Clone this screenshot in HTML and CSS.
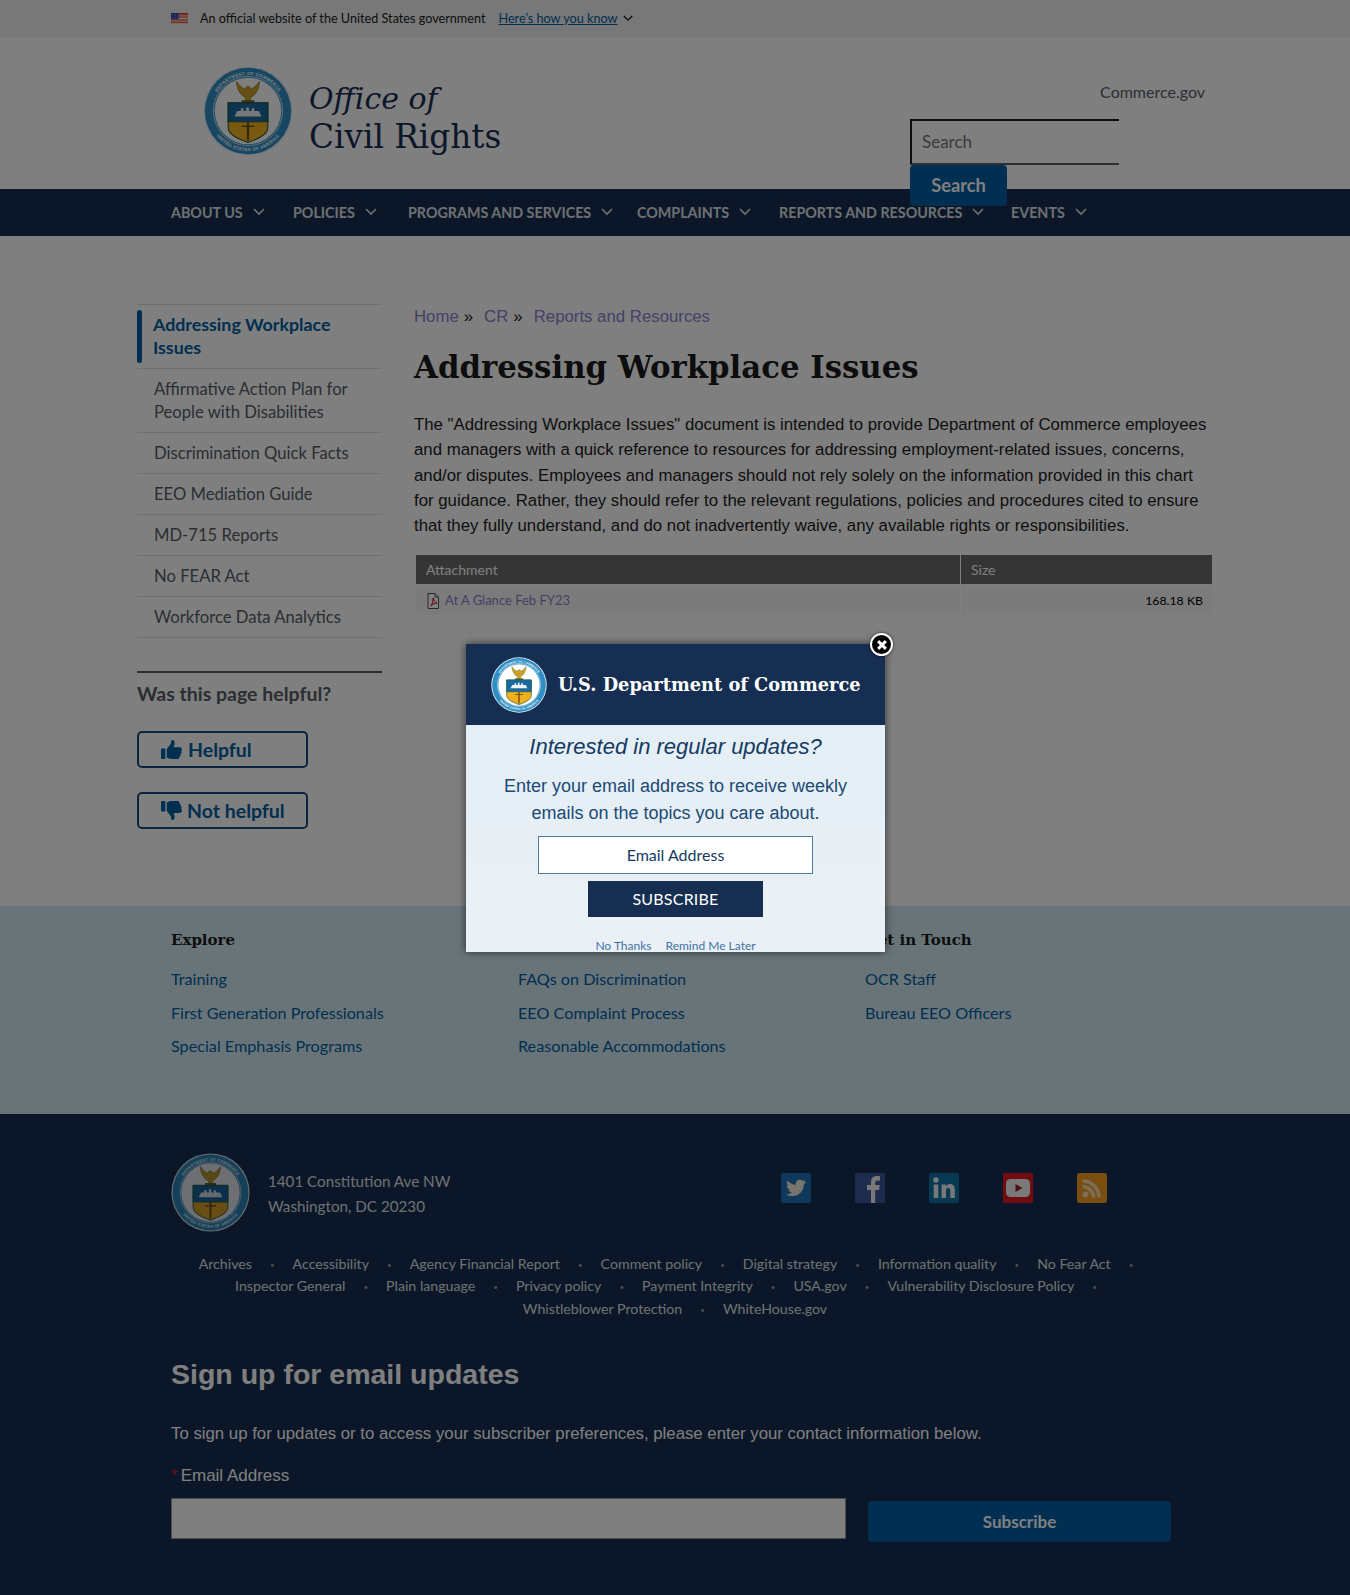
FILE: index.html
```html
<!DOCTYPE html>
<html lang="en">
<head>
<meta charset="utf-8">
<title>Addressing Workplace Issues</title>
<link rel="stylesheet" href="styles.css">
</head>
<body>
<svg class="defs" width="0" height="0" aria-hidden="true">
  <defs>
    <symbol id="seal" viewBox="0 0 100 100">
      <circle cx="50" cy="50" r="49.5" fill="#e8f2f8"/>
      <circle cx="50" cy="50" r="48" fill="#2f8fc4"/>
      <circle cx="50" cy="50" r="37" fill="#fff"/>
      <circle cx="50" cy="50" r="38.500" fill="none" stroke="#cfe6f3" stroke-width="1"/>
      <path id="arcTop" d="M10 50a40 40 0 0 1 80 0" fill="none"/>
      <path id="arcBot" d="M5.500 50a44.500 44.500 0 0 0 89 0" fill="none"/>
      <text class="seal-text"><textPath href="#arcTop" startOffset="50%" text-anchor="middle">DEPARTMENT OF COMMERCE</textPath></text>
      <text class="seal-text"><textPath href="#arcBot" startOffset="50%" text-anchor="middle">UNITED STATES OF AMERICA</textPath></text>
      <path d="M37 17c1 9 4 15 10 18l1 4h4l1-4c6-3 9-9 10-18-3 4-6 7-10 9l-1-3h-4l-1 3c-4-2-7-5-10-9z" fill="#c9a227" stroke="#6a5413" stroke-width=".6"/>
      <path d="M43 38h14v3H43z" fill="#7a6212"/>
      <path d="M28 41h44v28c0 8-14 13-22 16-8-3-22-8-22-16z" fill="#f2b01e" stroke="#1f5a46" stroke-width="1.200"/>
      <path d="M28 41h44v21H28z" fill="#1a6ba3" stroke="#1f5a46" stroke-width="1.200"/>
      <path d="M35 56l3-6h4v-3h3v3h3v-4h3v4h3v-3h3v3h5l3 6z" fill="#eef2f5"/>
      <path d="M50 62v21" stroke="#6b4f10" stroke-width="2.400"/>
      <path d="M43 67h14" stroke="#6b4f10" stroke-width="1.600"/>
    </symbol>
    <symbol id="chev" viewBox="0 0 12 8">
      <path d="M1 1l5 5 5-5" fill="none" stroke="currentColor" stroke-width="1.600"/>
    </symbol>
    <symbol id="thumb" viewBox="0 0 22 20">
      <path d="M0 9h4.500v11H0zM6 9.500l4-5c.7-1 .6-2 .6-3.200C10.600.400 11.400 0 12 0c1.600 0 2.400 1.700 2.400 3.200 0 1.500-.8 3-1.200 4.300h6.300c1.400 0 2.500 1 2.500 2.200 0 .8-.4 1.400-.9 1.800.3.400.5.900.5 1.400 0 .9-.5 1.600-1.200 2 .1.300.2.600.2.900 0 .9-.6 1.600-1.400 1.900.1.300.1.500.1.700 0 1.400-1.200 1.600-2.400 1.600H11c-2 0-3.400-.7-5-1.500z" fill="currentColor"/>
    </symbol>
  </defs>
</svg>

<section class="gov-banner">
  <div class="gov-inner">
    <svg class="flag" viewBox="0 0 20 13" width="17" height="11" aria-hidden="true">
      <rect width="20" height="13" fill="#db3e1f"/>
      <path d="M0 2h20v1H0zM0 4h20v1H0zM0 6h20v1H0zM0 8h20v1H0zM0 10h20v1H0zM0 12h20v1H0z" fill="#fff"/>
      <rect width="9" height="7" fill="#1e33b1"/>
      <path d="M1 1.500h7M1 3.500h7M1 5.500h7" stroke="#fff" stroke-width=".7" stroke-dasharray="1 1"/>
    </svg>
    <span class="gov-text">An official website of the United States government</span>
    <a class="gov-link" href="#">Here’s how you know</a>
    <svg class="gov-chev" width="10" height="7"><use href="#chev"/></svg>
  </div>
</section>

<header class="site-header">
  <a class="brand" href="#">
    <svg class="brand-seal"><use href="#seal"/></svg>
    <span class="brand-name"><em class="brand-office">Office of</em><br>Civil Rights</span>
  </a>
  <div class="header-tools">
    <a class="commerce-link" href="#">Commerce.gov</a>
    <form class="search">
      <input class="search-input" type="text" placeholder="Search">
      <button class="search-button" type="button">Search</button>
    </form>
  </div>
</header>

<nav class="main-nav">
  <ul class="nav-list">
    <li class="nav-item nav-about">About us<svg class="nav-chev"><use href="#chev"/></svg></li>
    <li class="nav-item nav-policies">Policies<svg class="nav-chev"><use href="#chev"/></svg></li>
    <li class="nav-item nav-programs">Programs and Services<svg class="nav-chev"><use href="#chev"/></svg></li>
    <li class="nav-item nav-complaints">Complaints<svg class="nav-chev"><use href="#chev"/></svg></li>
    <li class="nav-item nav-reports">Reports and Resources<svg class="nav-chev"><use href="#chev"/></svg></li>
    <li class="nav-item nav-events">Events<svg class="nav-chev"><use href="#chev"/></svg></li>
  </ul>
</nav>

<div class="page-body">
  <aside class="sidebar">
    <ul class="side-nav">
      <li class="side-item side-active"><a href="#">Addressing Workplace Issues</a></li>
      <li class="side-item"><a href="#">Affirmative Action Plan for People with Disabilities</a></li>
      <li class="side-item"><a href="#">Discrimination Quick Facts</a></li>
      <li class="side-item"><a href="#">EEO Mediation Guide</a></li>
      <li class="side-item"><a href="#">MD-715 Reports</a></li>
      <li class="side-item"><a href="#">No FEAR Act</a></li>
      <li class="side-item"><a href="#">Workforce Data Analytics</a></li>
    </ul>
    <div class="helpful">
      <h2 class="helpful-title">Was this page helpful?</h2>
      <button class="helpful-btn" type="button"><svg class="thumb"><use href="#thumb"/></svg>Helpful</button>
      <button class="helpful-btn" type="button"><svg class="thumb thumb-down"><use href="#thumb"/></svg>Not helpful</button>
    </div>
  </aside>
  <main class="content">
    <div class="crumbs"><a href="#">Home</a><span class="crumb-sep">»</span><a href="#">CR</a><span class="crumb-sep">»</span><a href="#">Reports and Resources</a></div>
    <h1 class="page-title">Addressing Workplace Issues</h1>
    <p class="lead">The "Addressing Workplace Issues" document is intended to provide Department of Commerce employees and managers with a quick reference to resources for addressing employment-related issues, concerns, and/or disputes. Employees and managers should not rely solely on the information provided in this chart for guidance. Rather, they should refer to the relevant regulations, policies and procedures cited to ensure that they fully understand, and do not inadvertently waive, any available rights or responsibilities.</p>
    <table class="files">
      <thead><tr><th class="col-name">Attachment</th><th>Size</th></tr></thead>
      <tbody><tr>
        <td><svg class="pdf" viewBox="0 0 14 16" width="14" height="16" aria-hidden="true"><path d="M2 .500h7l3.500 3.500v11.500H2z" fill="#fff" stroke="#555"/><path d="M9 .500V4h3.500" fill="#ddd" stroke="#555"/><path d="M5 13c2-3 2-6 2-8 1 3 2 4 4 5-2 0-4 1-6 3z" fill="none" stroke="#c00"/></svg><a href="#">At A Glance Feb FY23</a></td>
        <td class="size">168.18 KB</td>
      </tr></tbody>
    </table>
  </main>
</div>

<footer class="footer">
  <section class="footer-links">
    <div class="footer-col">
      <h3 class="footer-head">Explore</h3>
      <a href="#">Training</a><a href="#">First Generation Professionals</a><a href="#">Special Emphasis Programs</a>
    </div>
    <div class="footer-col">
      <h3 class="footer-head">Learn More</h3>
      <a href="#">FAQs on Discrimination</a><a href="#">EEO Complaint Process</a><a href="#">Reasonable Accommodations</a>
    </div>
    <div class="footer-col">
      <h3 class="footer-head">Get in Touch</h3>
      <a href="#">OCR Staff</a><a href="#">Bureau EEO Officers</a>
    </div>
  </section>
  <section class="footer-dark">
    <div class="identity">
      <div class="address">
        <svg class="footer-seal"><use href="#seal"/></svg>
        <p class="address-text">1401 Constitution Ave NW<br>Washington, DC 20230</p>
      </div>
      <div class="social">
        <a class="soc soc-tw" href="#" aria-label="Twitter"><svg viewBox="0 0 30 30"><rect width="30" height="30" rx="2" fill="#1d73b8"/><path d="M25 8.500c-.8.400-1.600.6-2.400.7.900-.5 1.500-1.300 1.800-2.200-.8.500-1.700.8-2.600 1-1.600-1.700-4.200-1.800-5.800-.2-1 1-1.500 2.500-1.200 3.900-3.300-.2-6.400-1.700-8.400-4.300-1.100 1.900-.5 4.300 1.300 5.500-.7 0-1.300-.2-1.900-.5 0 2 1.400 3.700 3.300 4.100-.6.200-1.200.2-1.900.1.500 1.700 2.100 2.800 3.800 2.900-1.700 1.300-3.900 2-6 1.700 1.900 1.200 4 1.900 6.300 1.900 7.500 0 11.800-6.300 11.600-11.900.8-.6 1.500-1.300 2.100-2.200z" fill="#f2e9dd"/></svg></a>
        <a class="soc soc-fb" href="#" aria-label="Facebook"><svg viewBox="0 0 30 30"><rect width="30" height="30" rx="2" fill="#3b5998"/><path d="M16 30V17h-4v-5h4V9c0-4 2.400-6 6-6 1.500 0 2.700.1 3 .2V7.500h-2.300c-2 0-2.500 1-2.500 2.300V12h4.500l-.6 5h-3.900v13z" fill="#f0f0f0"/></svg></a>
        <a class="soc soc-li" href="#" aria-label="LinkedIn"><svg viewBox="0 0 30 30"><rect width="30" height="30" rx="2" fill="#0d72a4"/><circle cx="7" cy="7" r="2.700" fill="#f0f0f0"/><path d="M4.700 11.500h4.600V25H4.700zM12.500 11.500h4.300v1.900c.8-1.400 2.300-2.300 4-2.300 4 0 5 2.500 5 6V25h-4.500v-7c0-1.800-.5-3-2-3-1.800 0-2.300 1.300-2.300 3v7h-4.500z" fill="#f0f0f0"/></svg></a>
        <a class="soc soc-yt" href="#" aria-label="YouTube"><svg viewBox="0 0 30 30"><rect width="30" height="30" rx="2" fill="#e31b23"/><rect x="3" y="6" width="24" height="18" rx="4.500" fill="#f2f2f2"/><path d="M12.500 11l7 4-7 4z" fill="#a01c20"/></svg></a>
        <a class="soc soc-rss" href="#" aria-label="RSS"><svg viewBox="0 0 30 30"><rect width="30" height="30" rx="3" fill="#f59d1f"/><circle cx="8.500" cy="21.500" r="3" fill="#f6ddb0"/><path d="M5.500 13.500a11 11 0 0 1 11 11M5.500 8a16.500 16.500 0 0 1 16.500 16.500" fill="none" stroke="#f6ddb0" stroke-width="3.600"/></svg></a>
      </div>
    </div>
    <ul class="policy-links">
      <li><a href="#">Archives</a></li><li><a href="#">Accessibility</a></li><li><a href="#">Agency Financial Report</a></li><li><a href="#">Comment policy</a></li><li><a href="#">Digital strategy</a></li><li><a href="#">Information quality</a></li><li><a href="#">No Fear Act</a></li><li><a href="#">Inspector General</a></li><li><a href="#">Plain language</a></li><li><a href="#">Privacy policy</a></li><li><a href="#">Payment Integrity</a></li><li><a href="#">USA.gov</a></li><li><a href="#">Vulnerability Disclosure Policy</a></li><li><a href="#">Whistleblower Protection</a></li><li class="no-dot"><a href="#">WhiteHouse.gov</a></li>
    </ul>
    <div class="signup">
      <h2 class="signup-title">Sign up for email updates</h2>
      <p class="signup-text">To sign up for updates or to access your subscriber preferences, please enter your contact information below.</p>
      <label class="signup-label"><span class="req">*</span>Email Address</label>
      <div class="signup-row">
        <input class="signup-input" type="text" aria-label="Email Address">
        <button class="signup-btn" type="button">Subscribe</button>
      </div>
    </div>
  </section>
</footer>

<div class="overlay"></div>

<div class="modal">
  <div class="modal-head">
    <svg class="modal-seal"><use href="#seal"/></svg>
    <span class="modal-org">U.S. Department of Commerce</span>
  </div>
  <div class="modal-body">
    <h2 class="modal-q">Interested in regular updates?</h2>
    <p class="modal-text">Enter your email address to receive weekly<br>emails on the topics you care about.</p>
    <input class="modal-input" type="text" placeholder="Email Address">
    <button class="modal-sub" type="button">SUBSCRIBE</button>
    <div class="modal-links"><a href="#">No Thanks</a><a href="#">Remind Me Later</a></div>
  </div>
</div>
<button class="modal-close" type="button" aria-label="Close"><svg viewBox="0 0 14 14" width="12" height="12"><path d="M2.500 2.500l9 9M11.500 2.500l-9 9" stroke="#fff" stroke-width="3.400"/></svg></button>
</body>
</html>
```
FILE: styles.css
```css
* { box-sizing: border-box; }
html, body { margin: 0; padding: 0; }
body {
  position: relative;
  min-height: 1595px;
  background: #fff;
  color: #1b1b1b;
  font-family: "Lato", "Liberation Sans", sans-serif;
  overflow-x: hidden;
}
.defs { position: absolute; }
a { text-decoration: none; color: inherit; }
ul { list-style: none; margin: 0; padding: 0; }
.seal-text { font: 700 5px "Liberation Sans", sans-serif; fill: #fff; letter-spacing: .35px; }

/* gov banner */
.gov-banner { height: 38px; background: #f0f0f0; padding-left: 171px; }
.gov-inner { display: flex; align-items: center; height: 36px; font-size: 12.650px; }
.flag { margin-right: 12px; }
.gov-text { margin-right: 13px; }
.gov-link { color: #005ea2; text-decoration: underline; }
.gov-chev { margin-left: 6px; }

/* header */
.site-header { position: relative; height: 151px; background: #fff; padding-left: 203px; }
.brand { display: flex; align-items: flex-start; gap: 16px; padding-top: 28px; color: #162e51; }
.brand-seal { width: 90px; height: 90px; flex: none; }
.brand-name { margin-top: 13px; font: 400 32.700px/38px "DejaVu Serif", "Liberation Serif", serif; }
.brand-office { font-size: 30px; }
.header-tools { position: absolute; left: 910px; top: 0; width: 300px; }
.commerce-link { display: block; text-align: right; padding-right: 5px; padding-top: 44px; font-size: 16px; line-height: 20px; color: #565c65; }
.search { display: block; margin-top: 17px; }
.search-input {
  display: block; width: 209px; height: 46px; padding: 0 10px 2px;
  border: 2px solid #1b1b1b; border-right: 0; border-bottom-color: #565c65;
  background: #fff; font: 17px "Lato", sans-serif; outline: 0;
}
.search-input::placeholder { color: #71767a; }
.search-button {
  display: block; position: relative; z-index: 2; width: 97px; height: 41px; padding: 0 0 2px; border: 0; border-radius: 4px;
  background: #005ea2; color: #fff; font: 700 18.300px "Lato", sans-serif;
}

/* nav */
.main-nav { height: 47px; background: #162e51; }
.nav-list { display: flex; height: 46px; padding-left: 171px; align-items: center; }
.nav-item { display: flex; align-items: center; color: #dfe1e2; font-weight: 700; font-size: 14.300px; text-transform: uppercase; }
.nav-chev { width: 12px; height: 8px; margin-left: 10px; }
.nav-about { width: 122px; }
.nav-policies { width: 115px; }
.nav-programs { width: 229px; }
.nav-complaints { width: 142px; }
.nav-reports { width: 232px; }

/* body */
.page-body { display: flex; height: 670px; padding: 68px 0 0 137px; }
.sidebar { width: 245px; margin-right: 32px; flex: none; }
.side-nav { border-top: 1px solid #dfe1e2; }
.side-item { border-bottom: 1px solid #dfe1e2; padding: 8.500px 0 8.500px 17px; font-size: 16.650px; line-height: 23px; color: #565c65; }
.side-active { position: relative; padding: 8px 24px 9px 16px; color: #005ea2; font-size: 17.800px; font-weight: 700; }
.side-active::before { content: ""; position: absolute; left: 0; top: 5px; bottom: 5px; width: 5px; border-radius: 3px; background: #005ea2; }
.helpful { margin-top: 33px; border-top: 2px solid #565c65; }
.helpful-title { margin: 9px 0 26px; font-size: 19.500px; line-height: 23px; font-weight: 700; color: #565c65; }
.helpful-btn {
  display: flex; align-items: center; width: 171px; height: 37px; margin-bottom: 24px; padding: 0 0 0 22px;
  border: 2px solid #1a4480; border-radius: 5px; background: none;
  color: #005ea2; font: 700 19.500px "Lato", sans-serif;
}
.thumb { width: 21px; height: 19px; margin-right: 6px; }
.thumb-down { transform: scaleY(-1); margin-right: 5px; }

/* main */
.content { width: 798px; flex: none; font-family: "Liberation Sans", sans-serif; }
.crumbs { margin-top: 1px; font-size: 16.800px; line-height: 24px; color: #8a80d0; }
.crumb-sep { color: #1b1b1b; margin: 0 11px 0 5px; }
.page-title { margin: 14px 0 0; font: 700 30.800px/48px "DejaVu Serif", serif; color: #1b1b1b; }
.lead { margin: 21px 0 0; font-size: 16.800px; line-height: 25.300px; color: #1b1b1b; }
.files { width: 798px; margin: 16px 0 0 1px; border-collapse: separate; border-spacing: 1px; font-family: "Lato", sans-serif; font-size: 14px; }
.files th { height: 29px; padding: 0 10px; background: #6b6b6b; color: #fff; text-align: left; font-weight: 400; }
.col-name { width: 544px; }
.files td { height: 30px; padding: 0 10px; background: #f6f6f6; font-size: 13px; }
.files a { color: #8a80d0; }
.pdf { vertical-align: -4px; margin-right: 5px; }
.files .size { text-align: right; font-size: 12.300px; padding-right: 9px; color: #000; }

/* footer */
.footer-links {
  display: grid; grid-template-columns: 347px 347px 347px; height: 208px; padding: 22px 0 0 171px;
  background: #d3e9f2;
}
.footer-col { display: flex; flex-direction: column; }
.footer-col a { font-size: 16.200px; line-height: 33.500px; color: #005ea2; }
.footer-head { margin: 0 0 10px; font: 700 15px/24px "DejaVu Serif", serif; color: #1b1b1b; }
.footer-dark { height: 481px; background: #162e51; padding: 39px 0 0 171px; color: #fff; }
.identity { display: flex; }
.address { display: flex; align-items: center; width: 610px; }
.footer-seal { width: 79px; height: 79px; margin-right: 18px; opacity: .85; }
.address-text { margin: 2px 0 0; font-size: 15.200px; line-height: 25px; color: #dfe1e2; }
.social { display: flex; gap: 44px; padding-top: 20px; }
.soc { display: block; width: 30px; height: 30px; }
.soc svg { display: block; width: 30px; height: 30px; }
.policy-links { display: flex; flex-wrap: wrap; justify-content: center; width: 1008px; margin-top: 21px; font-size: 14.200px; line-height: 22.400px; color: #dfe1e2; }
.policy-links li { height: 22.400px; }
.policy-links li::after { content: "•"; margin: 0 18px; font-size: 8px; line-height: 0; vertical-align: 1px; color: #8a9aa8; }
.policy-links .no-dot::after { content: none; }
.signup { font-family: "Liberation Sans", sans-serif; color: #fff; }
.signup-title { margin: 34px 0 0; font-size: 28.500px; line-height: 40px; font-weight: 700; }
.signup-text { margin: 29px 0 0; font-size: 16.800px; line-height: 22px; }
.signup-label { display: block; margin-top: 20px; font-size: 17px; line-height: 22px; }
.req { color: #d4143c; margin-right: 3px; }
.signup-row { display: flex; margin-top: 11px; }
.signup-input { width: 675px; height: 41px; border: 1px solid #999; background: #fff; }
.signup-btn { width: 303px; height: 41px; margin: 3px 0 0 22px; border: 0; border-radius: 4px; background: #005ea2; color: #fff; font: 700 17px "Lato", sans-serif; }

/* modal */
.overlay { position: absolute; inset: 0; background: rgba(0, 0, 0, .5); z-index: 10; }
.modal {
  position: absolute; z-index: 11; left: 466px; top: 644px; width: 419px; height: 308px; overflow: hidden;
  background: linear-gradient(#e2eef5, #eaf0f6);
  box-shadow: 0 0 8px rgba(0, 0, 0, .6);
}
.modal-head { display: flex; align-items: center; gap: 11px; height: 81px; padding-left: 25px; background: #162e51; }
.modal-seal { width: 56px; height: 56px; flex: none; }
.modal-org { font: 700 17.800px "DejaVu Serif", serif; color: #fff; white-space: nowrap; }
.modal-body { text-align: center; font-family: "Liberation Sans", sans-serif; color: #1b4a75; }
.modal-q { margin: 8px 0 0; font-size: 22px; line-height: 28px; font-weight: 400; font-style: italic; color: #143a63; }
.modal-text { margin: 12px 0 0; font-size: 18px; line-height: 27px; }
.modal-input {
  display: block; width: 275px; height: 38px; margin: 9px auto 0; padding: 0 0 2px; border: 1px solid #4a7aa6; background: #fff;
  text-align: center; font: 16px "Lato", sans-serif;
}
.modal-input::placeholder { color: #143a63; opacity: 1; }
.modal-sub {
  display: block; width: 175px; height: 36px; margin: 7px auto 0; padding: 0 0 2px; border: 0; background: #162e51; color: #fff;
  font: 400 16px "Lato", sans-serif; letter-spacing: .2px;
}
.modal-links { display: flex; justify-content: center; gap: 14px; margin-top: 23px; font: 12px/12px "Lato", sans-serif; color: #3f73a3; }
.modal-close {
  position: absolute; z-index: 12; left: 870px; top: 633px; width: 23px; height: 23px; padding: 0;
  display: flex; align-items: center; justify-content: center;
  border: 2px solid #fff; border-radius: 50%; background: #000; box-shadow: 0 0 3px rgba(0,0,0,.7);
}
```
